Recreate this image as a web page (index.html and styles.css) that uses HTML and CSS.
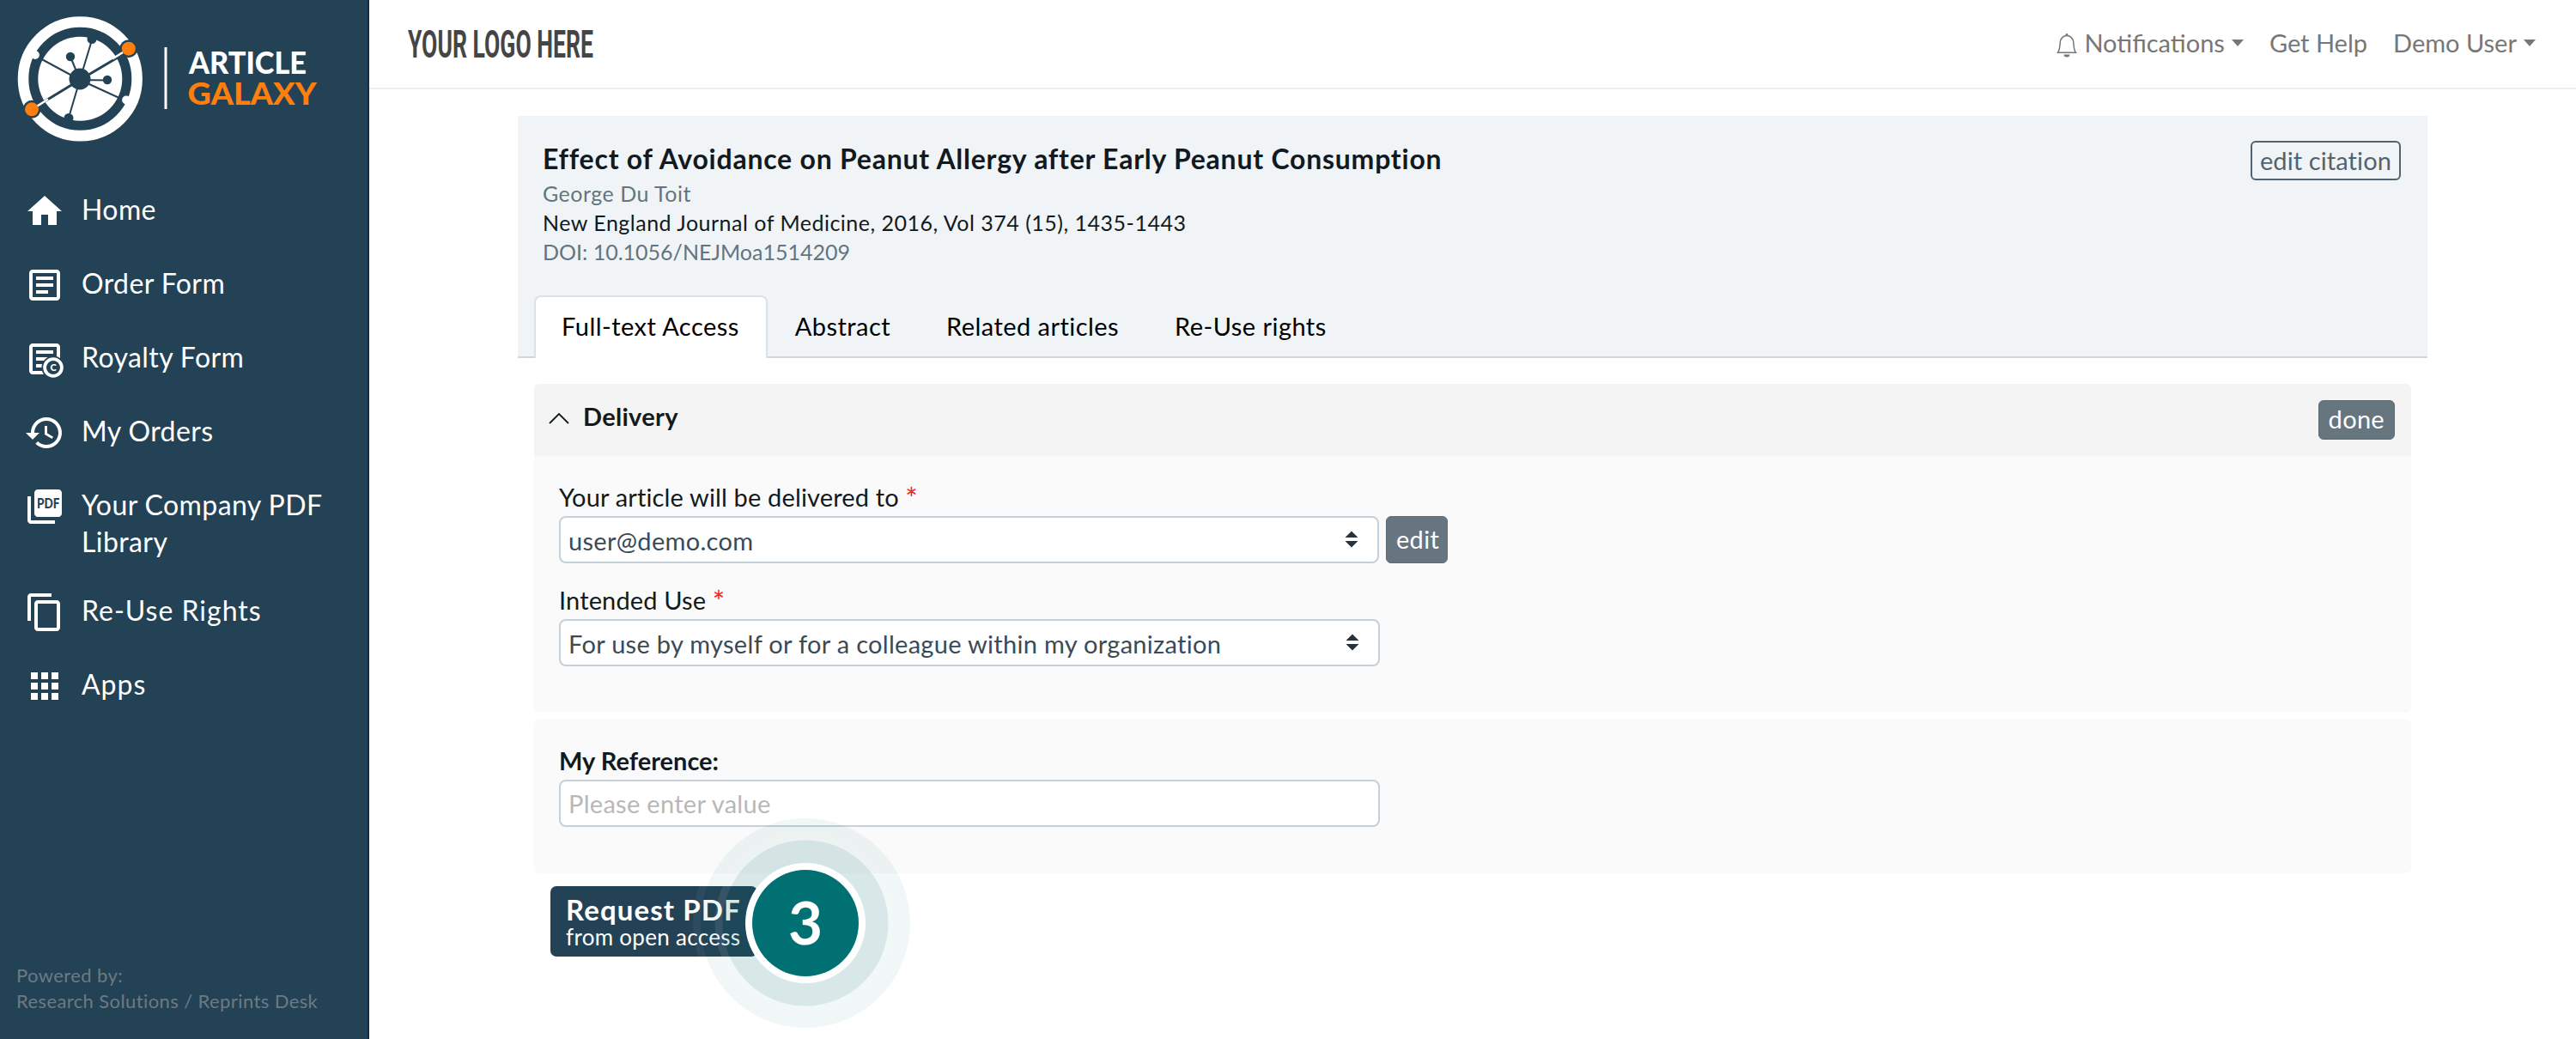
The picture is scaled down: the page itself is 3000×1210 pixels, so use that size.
FILE: index.html
```
<!DOCTYPE html>
<html lang="en">
<head>
    <meta charset="UTF-8">
    <meta name="viewport" content="width=device-width, initial-scale=1.0">
    <title>Article Galaxy</title>
    <link rel="stylesheet" href="styles.css">
</head>
<body>
    <!-- Sidebar -->
    <aside class="sidebar">
        <svg class="logo" width="390" height="150" viewBox="0 0 390 150">
            <circle cx="93.3" cy="74.8" r="66.3" fill="none" stroke="#fff" stroke-width="12.6"/>
            <circle cx="93.3" cy="74.8" r="49" fill="#fff"/>
            <!-- dark spokes inside the disc -->
            <g stroke="#234256" stroke-width="2" fill="#234256">
                <path d="M93 76L45 50M93 76L141 98M93 76L106 33M93 76L80 120M93 76L82 49M93 76L125 76.5"/>
                <path d="M93 76L137 50M93 76L52 101" stroke-width="3"/>
                <circle cx="107" cy="28.5" r="4.5"/>
                <circle cx="80" cy="120.5" r="4.5"/>
                <circle cx="82" cy="49" r="4.2"/>
                <circle cx="125" cy="76" r="4.2"/>
                <circle cx="93" cy="75" r="11.5"/>
                <circle cx="149.8" cy="39.7" r="10.5" stroke="none"/>
                <circle cx="37" cy="110.3" r="10.5" stroke="none"/>
            </g>
            <!-- white spokes crossing the gap -->
            <g stroke="#fff" stroke-width="2.6" fill="#fff">
                <path d="M131 51.5L143 44M43.5 106.5L56 98.5"/>
                <circle cx="41" cy="47" r="3.6"/>
                <circle cx="147" cy="99.5" r="3.6"/>
            </g>
            <circle cx="149.8" cy="39.7" r="8" fill="#ff7f0e"/>
            <circle cx="37" cy="110.3" r="8" fill="#ff7f0e"/>
            <rect x="191.5" y="38" width="3" height="72" fill="#fff"/>
            <text class="wordmark" x="220" y="69" textLength="137" lengthAdjust="spacingAndGlyphs" fill="#fff">ARTICLE</text>
            <text class="wordmark" x="218.5" y="105" textLength="150" lengthAdjust="spacingAndGlyphs" fill="#ff7f0e">GALAXY</text>
        </svg>

        <nav class="menu">
            <a class="menu-item">
                <svg viewBox="0 0 24 24"><path d="M10 20v-6h4v6h5v-8h3L12 3 2 12h3v8z"/></svg>
                <span>Home</span>
            </a>
            <a class="menu-item">
                <svg viewBox="0 0 24 24"><path d="M19 5v14H5V5h14m0-2H5c-1.1 0-2 .9-2 2v14c0 1.1.9 2 2 2h14c1.1 0 2-.9 2-2V5c0-1.1-.9-2-2-2z"/><path d="M14 17H7v-2h7v2zm3-4H7v-2h10v2zm0-4H7V7h10v2z"/></svg>
                <span>Order Form</span>
            </a>
            <a class="menu-item">
                <svg viewBox="0 0 24 24">
                    <path d="M19 5v14H5V5h14m0-2H5c-1.1 0-2 .9-2 2v14c0 1.1.9 2 2 2h14c1.1 0 2-.9 2-2V5c0-1.1-.9-2-2-2z"/><path d="M14 17H7v-2h7v2zm3-4H7v-2h10v2zm0-4H7V7h10v2z"/>
                    <circle class="knockout" cx="17" cy="17" r="6.8"/>
                    <circle cx="17" cy="17" r="4.9" fill="none" stroke="#fff" stroke-width="2"/>
                    <circle class="knockout" cx="17" cy="17" r="3.9"/>
                    <text class="tiny" x="17" y="19" text-anchor="middle" font-size="5.5">C</text>
                </svg>
                <span>Royalty Form</span>
            </a>
            <a class="menu-item">
                <svg viewBox="0 0 24 24"><path d="M13 3c-4.97 0-9 4.03-9 9H1l3.89 3.89.07.14L9 12H6c0-3.87 3.13-7 7-7s7 3.13 7 7-3.13 7-7 7c-1.93 0-3.68-.79-4.94-2.06l-1.42 1.42C8.27 19.99 10.51 21 13 21c4.97 0 9-4.03 9-9s-4.03-9-9-9zm-1 5v5l4.28 2.54.72-1.21-3.5-2.08V8H12z"/></svg>
                <span>My Orders</span>
            </a>
            <a class="menu-item">
                <svg viewBox="0 0 24 24">
                    <path d="M20 2H8c-1.1 0-2 .9-2 2v12c0 1.1.9 2 2 2h12c1.1 0 2-.9 2-2V4c0-1.1-.9-2-2-2zM4 6H2v14c0 1.1.9 2 2 2h14v-2H4V6z"/>
                    <text class="tiny pdf" x="7.5" y="12.8" textLength="13.2" lengthAdjust="spacingAndGlyphs" font-size="8.5">PDF</text>
                </svg>
                <span>Your Company PDF Library</span>
            </a>
            <a class="menu-item">
                <svg viewBox="0 0 24 24"><path d="M16 1H4c-1.1 0-2 .9-2 2v14h2V3h12V1zm3 4H8c-1.1 0-2 .9-2 2v14c0 1.1.9 2 2 2h11c1.1 0 2-.9 2-2V7c0-1.1-.9-2-2-2zm0 16H8V7h11v14z"/></svg>
                <span class="wide">Re-Use Rights</span>
            </a>
            <a class="menu-item">
                <svg viewBox="0 0 24 24"><path d="M4 8h4V4H4v4zm6 12h4v-4h-4v4zm-6 0h4v-4H4v4zm0-6h4v-4H4v4zm6 0h4v-4h-4v4zm6-10v4h4V4h-4zm-6 4h4V4h-4v4zm6 6h4v-4h-4v4zm0 6h4v-4h-4v4z"/></svg>
                <span class="wide">Apps</span>
            </a>
        </nav>

        <div class="powered">Powered by:<br>Research Solutions / Reprints Desk</div>
    </aside>

    <div class="page">
        <header class="topbar">
            <svg class="client-logo" width="220" height="60" viewBox="0 0 220 60">
                <text x="0" y="47" textLength="216" lengthAdjust="spacingAndGlyphs">YOUR LOGO HERE</text>
            </svg>
            <div class="links">
                <a class="link">
                    <svg class="bell" width="24" height="30" viewBox="0 0 24 30">
                        <path d="M1.5 23.2C4 20 3.8 16 4.2 11.5C4.6 6.5 8 3.5 12 3.5S19.4 6.5 19.8 11.5C20.2 16 20 20 22.5 23.2Z" fill="none" stroke="#777" stroke-width="1.5"/>
                        <circle cx="12" cy="2.5" r="1.4" fill="#777"/>
                        <path d="M8.5 25.5h7a3.5 3 0 0 1-7 0z" fill="#777"/>
                    </svg>
                    Notifications<i class="caret"></i>
                </a>
                <a class="link">Get Help</a>
                <a class="link">Demo User<i class="caret"></i></a>
            </div>
        </header>

        <main>
            <!-- Citation -->
            <section class="citation">
                <div class="citation-top">
                    <div>
                        <h1>Effect of Avoidance on Peanut Allergy after Early Peanut Consumption</h1>
                        <p class="muted">George Du Toit</p>
                        <p class="journal">New England Journal of Medicine, 2016, Vol 374 (15), 1435-1443</p>
                        <p class="muted doi">DOI: 10.1056/NEJMoa1514209</p>
                    </div>
                    <button class="btn btn-outline">edit citation</button>
                </div>
                <div class="tabs">
                    <a class="tab active">Full-text Access</a>
                    <a class="tab">Abstract</a>
                    <a class="tab">Related articles</a>
                    <a class="tab">Re-Use rights</a>
                </div>
            </section>

            <!-- Delivery -->
            <section class="panel">
                <div class="panel-head">
                    <svg width="24" height="14" viewBox="0 0 24 14"><path d="M1 13L12 2l11 11" fill="none" stroke="#111a20" stroke-width="1.8"/></svg>
                    <h2>Delivery</h2>
                    <button class="btn">done</button>
                </div>
                <div class="panel-body">
                    <label>Your article will be delivered to <b>*</b></label>
                    <div class="row">
                        <div class="field select short">
                            <span>user@demo.com</span>
                            <svg width="16" height="20" viewBox="0 0 16 20"><path d="M8 .5L15.5 8H.5zM8 19.5L.5 12h15z"/></svg>
                        </div>
                        <button class="btn btn-edit">edit</button>
                    </div>
                    <label class="second">Intended Use <b>*</b></label>
                    <div class="field select">
                        <span>For use by myself or for a colleague within my organization</span>
                        <svg width="16" height="20" viewBox="0 0 16 20"><path d="M8 .5L15.5 8H.5zM8 19.5L.5 12h15z"/></svg>
                    </div>
                </div>
            </section>

            <section class="panel reference">
                <div class="panel-body">
                    <label class="bold" for="reference">My Reference:</label>
                    <input class="field" id="reference" type="text" placeholder="Please enter value">
                </div>
            </section>

            <div class="request">
                <button class="request-btn">
                    <strong>Request PDF</strong>
                    <span>from open access</span>
                </button>
                <svg class="step" width="264" height="264" viewBox="-132 -132 264 264">
                    <circle r="126.5" fill="none" stroke="#fff" stroke-opacity=".05" stroke-width="9"/>
                    <circle r="122" fill="#007073" fill-opacity=".055"/>
                    <circle r="101" fill="none" stroke="#fff" stroke-opacity=".09" stroke-width="9"/>
                    <circle r="96.5" fill="#007073" fill-opacity=".1"/>
                    <circle r="70" fill="#fff"/>
                    <circle r="62" fill="#007073"/>
                    <text y="25" text-anchor="middle">3</text>
                </svg>
            </div>
        </main>
    </div>
</body>
</html>
```
FILE: styles.css
```
* {
    box-sizing: border-box;
}
body {
    margin: 0;
    display: flex;
    height: 1210px;
    overflow: hidden;
    font-family: Lato, "Open Sans", sans-serif;
    font-size: 29px;
    line-height: 42px;
    letter-spacing: 0.3px;
    color: #111a20;
    background: #fff;
}
h1, h2, p {
    margin: 0;
}
button, input {
    font: inherit;
    letter-spacing: inherit;
}

/* sidebar */
.sidebar {
    display: flex;
    flex-direction: column;
    width: 430px;
    flex: none;
    padding-top: 17px;
    background: #234256;
    border-right: 2px solid #0f3046;
    color: #fff;
}
.logo {
    display: block;
}
.wordmark {
    font-size: 36px;
    font-weight: 900;
    letter-spacing: 0;
}
.menu {
    padding: 55px 28px 0;
}
.menu-item {
    display: flex;
    gap: 19px;
    min-height: 48px;
    margin-bottom: 38px;
    font-size: 32px;
    line-height: 42.5px;
    letter-spacing: 0.4px;
}
.menu-item span {
    padding-top: 1px;
    margin-bottom: -1px;
}
.menu-item svg {
    width: 48px;
    height: 48px;
    flex: none;
    fill: #fff;
}
.menu-item .knockout {
    fill: #234256;
}
.menu-item .wide {
    letter-spacing: 1px;
}
.tiny {
    font-weight: 900;
    letter-spacing: 0;
}
.menu-item .pdf {
    fill: #234256;
}
.powered {
    margin-top: auto;
    padding: 0 18px 29px 19px;
    font-size: 22px;
    line-height: 30px;
    letter-spacing: 0.4px;
    color: #6c7a83;
}

/* top bar */
.page {
    flex: 1;
}
.topbar {
    display: flex;
    justify-content: space-between;
    align-items: center;
    height: 104px;
    padding: 0 47px 2px 45px;
    border-bottom: 2px solid #eee;
}
.client-logo text {
    font-family: Roboto, sans-serif;
    font-size: 44px;
    font-weight: 700;
    letter-spacing: 0;
    fill: #454545;
}
.links {
    display: flex;
    gap: 30px;
    letter-spacing: 0;
    color: #777;
}
.link {
    display: flex;
    align-items: center;
}
.bell {
    margin: 5px 8px 0 0;
}
.caret {
    margin-left: 8px;
    border: 7.5px solid transparent;
    border-top: 8px solid #777;
    border-bottom: 0;
}

/* citation */
main {
    padding: 31px 173px 0;
}
.citation {
    height: 282px;
    background: #f0f4f7;
    border-bottom: 2px solid #cfd7dd;
}
.citation-top {
    display: flex;
    justify-content: space-between;
    align-items: flex-start;
    height: 209px;
    padding: 29px 31px 0 29px;
}
h1 {
    padding-top: 2px;
    margin-bottom: 4px;
    font-size: 32px;
    line-height: 38px;
    letter-spacing: 0.76px;
}
.citation p {
    font-size: 25px;
    line-height: 34.2px;
    letter-spacing: 0.5px;
}
.citation .muted {
    color: #627580;
}
.citation .doi {
    letter-spacing: 0;
}
.tabs {
    display: flex;
    padding-left: 19px;
}
.tab {
    height: 73px;
    padding: 13px 31px 0 30px;
    border: 2px solid transparent;
    border-bottom: 0;
    letter-spacing: 0.45px;
    color: #000;
}
.tab.active {
    background: #fff;
    border-color: #dbe2e7;
    border-radius: 8px 8px 0 0;
}

/* buttons */
.btn {
    height: 46px;
    padding: 0 11px 2px;
    border: 1px solid #5c6b75;
    border-radius: 6px;
    background: #67757e;
    color: #fff;
}
.btn-outline {
    padding: 0 9px 2px;
    border: 2px solid #526370;
    background: none;
    color: #526370;
    letter-spacing: 0.1px;
}
.btn-edit {
    width: 72px;
    height: 55px;
}

/* panels */
.panel {
    margin: 30px 19px 0;
    background: #fafafa;
    border-radius: 6px;
    overflow: hidden;
}
.panel-head {
    display: flex;
    align-items: flex-start;
    height: 84px;
    padding: 17px 19px 0 17px;
    background: #f4f4f4;
}
.panel-head svg {
    margin-top: 16px;
}
.panel-head .btn {
    margin: 2px 0 0 auto;
}
h2 {
    margin-left: 16px;
    font-size: 29px;
}
.panel-body {
    display: flex;
    flex-direction: column;
    height: 299px;
    padding: 27px 29px 0;
}
.reference {
    margin-top: 8px;
}
.reference .panel-body {
    height: 179px;
}
label {
    height: 43px;
    letter-spacing: 0.15px;
}
label.second {
    margin-top: 22px;
}
label.bold {
    font-weight: bold;
    letter-spacing: 0;
}
label b {
    font-weight: normal;
    font-size: 34px;
    line-height: 30px;
    vertical-align: -3px;
    color: #f5222d;
}
.row {
    display: flex;
    gap: 8px;
}
.field {
    width: 956px;
    height: 55px;
    padding: 0 9px 1px;
    border: 2px solid #c5d0d8;
    border-radius: 8px;
    background: #fff;
    color: #3a4a56;
}
.field.short {
    width: 955px;
}
.field::placeholder {
    color: #b8b8b8;
    opacity: 1;
}
.select {
    display: flex;
    justify-content: space-between;
    padding: 6px 22px 0 9px;
}
.select span {
    height: 39px;
    overflow: hidden;
}
.select svg {
    margin-top: 9px;
    fill: #26333c;
}

/* request button with its step marker */
.request {
    position: relative;
    margin: 15px 38px 0;
}
.request-btn {
    display: flex;
    flex-direction: column;
    width: 241px;
    height: 82px;
    padding: 9px 18px;
    border: 0;
    border-radius: 7px;
    background: #234256;
    color: #fff;
    text-align: left;
}
.request-btn strong {
    font-size: 33px;
    line-height: 36px;
    letter-spacing: 1.1px;
}
.request-btn span {
    font-size: 26px;
    line-height: 28px;
}
.step {
    position: absolute;
    left: 165px;
    top: -89px;
}
.step text {
    font-size: 69px;
    font-weight: 700;
    letter-spacing: 0;
    fill: #fff;
}
```
